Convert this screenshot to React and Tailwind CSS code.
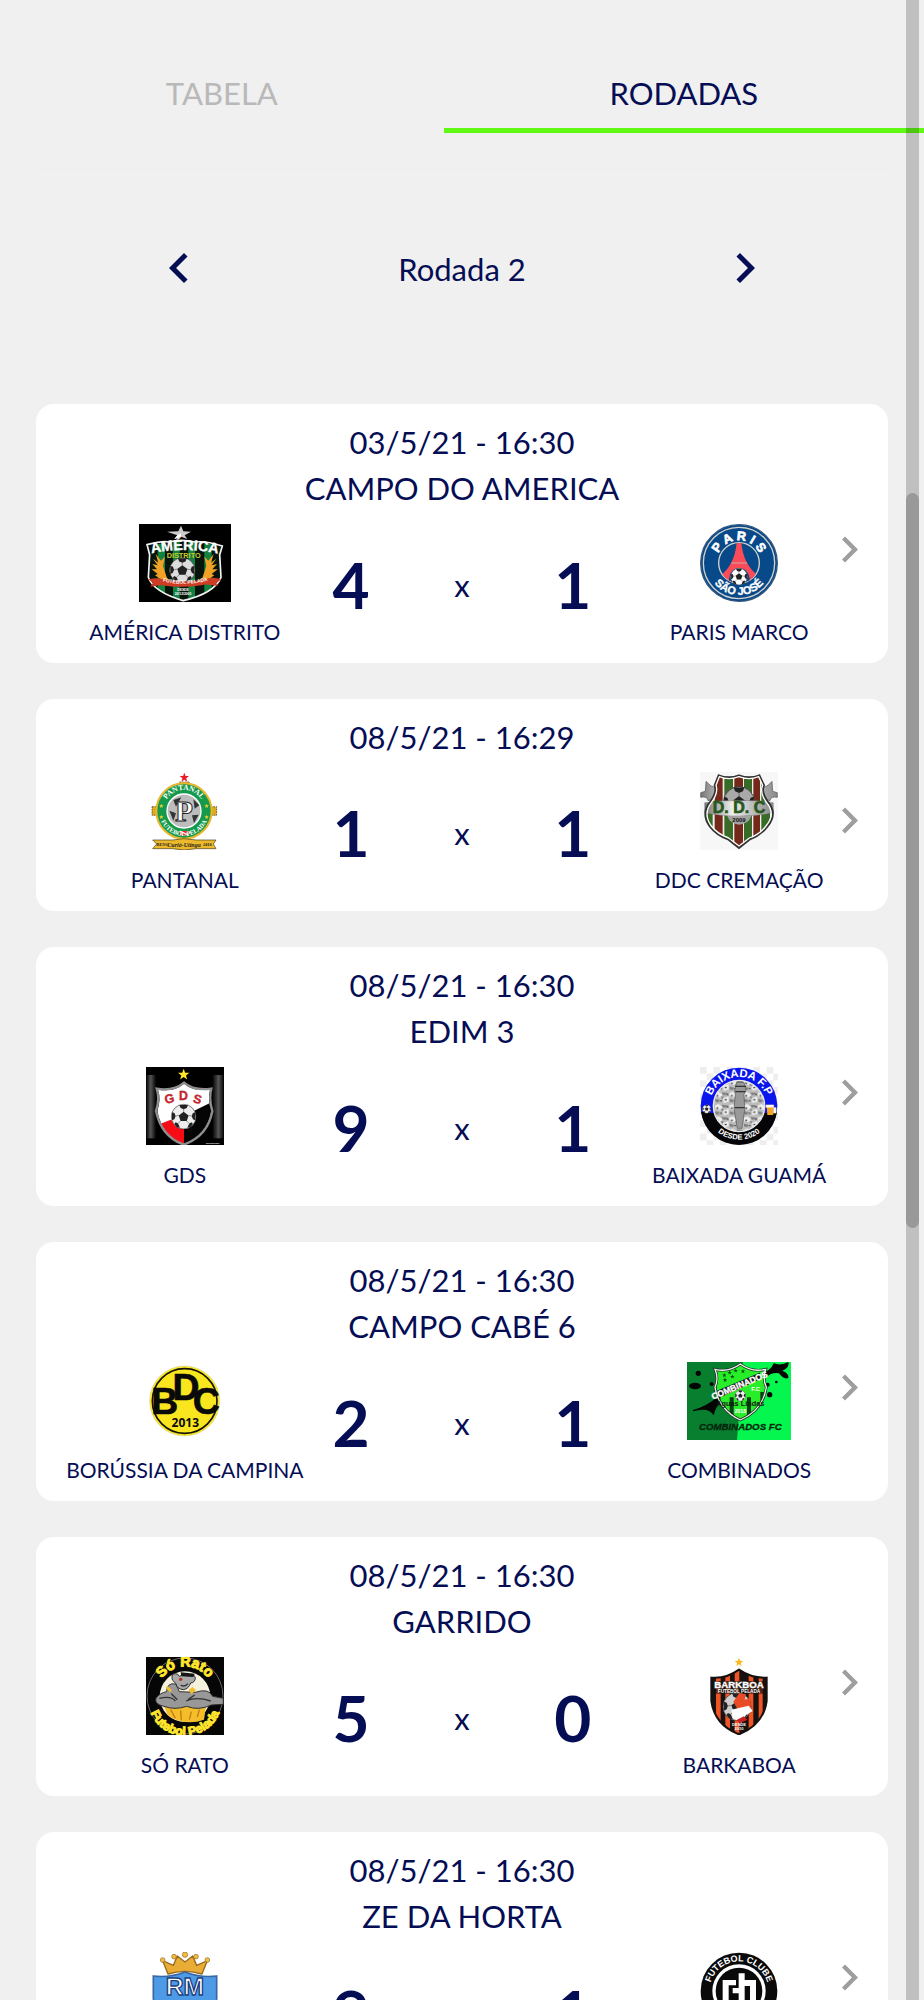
import { useState } from "react";

const star = "M0 -10 L2.5 -3.2 L9.5 -3.1 L3.9 1.2 L5.9 8.1 L0 4 L-5.9 8.1 L-3.9 1.2 L-9.5 -3.1 L-2.5 -3.2 Z";

const Star = ({ x, y, size, fill }) => (
  <path d={star} fill={fill} transform={`translate(${x} ${y}) scale(${size / 10})`} />
);

const Ball = ({ x, y, r, fill = "#eee" }) => (
  <g transform={`translate(${x} ${y}) scale(${r / 20})`}>
    <circle r="20" fill={fill} stroke="#333" strokeWidth="1" />
    <path
      d="M0 -8 L8 -2 L5 7 L-5 7 L-8 -2 Z M-7 -19 L7 -19 L5 -14 L0 -12 L-5 -14 Z M19 -7 L19 6 L15 4 L13 -1 L15 -6 Z M-19 -7 L-19 6 L-15 4 L-13 -1 L-15 -6 Z M11 17 L15 12 L13 9 L9 11 L6 18 Z M-11 17 L-15 12 L-13 9 L-9 11 L-6 18 Z"
      fill="#222"
    />
    <path
      d="M0 -8 V-13 M8 -2 L13 -1 M5 7 L9 11 M-5 7 L-9 11 M-8 -2 L-13 -1"
      stroke="#555"
      strokeWidth="1"
    />
  </g>
);

const America = () => (
  <svg viewBox="0 0 276 234" className="h-[78px] w-[92px]" role="img" aria-label="Escudo América Distrito">
    <defs>
      <clipPath id="america-shield">
        <path d="M27 66 Q126 42 249 66 L244 158 Q236 206 132 230 Q36 200 27 158 Z" />
      </clipPath>
      <path id="america-top" d="M30 90 Q134 66 244 90" />
      <path id="america-band" d="M72 172 Q134 188 206 170" />
    </defs>
    <rect width="276" height="234" fill="#000" />
    <g clipPath="url(#america-shield)">
      <rect width="276" height="234" fill="#07140c" />
      <path d="M56 40h22v194H56z M102 40h20v194h-20z M148 40h20v194h-20z M196 40h22v194h-22z" fill="#14823f" />
    </g>
    <path
      d="M24 62 Q70 50 90 54 Q126 44 168 54 Q200 50 250 66 L242 92 L246 160 Q226 208 132 230 Q44 204 28 160 L32 92 Z"
      fill="none"
      stroke="#f2f2f2"
      strokeWidth="5"
    />
    <path d="M126 5 L133 22 L156 23 L137 34 L145 45 L126 38 L106 45 L115 34 L84 23 L118 22 Z" fill="#ccc" />
    <path d="M126 5 L126 38 L106 45 L115 34 L126 28 Z" fill="#fff" />
    <path d="M42 104 L58 116 L50 90 L66 110 L78 98 L72 126 L84 162 L104 178 L72 170 L48 154 L56 150 L38 136 L54 136 L40 120 L56 124 Z" fill="#f0a126" />
    <path d="M232 104 L216 116 L224 90 L208 110 L196 98 L202 126 L190 162 L170 178 L202 170 L226 154 L218 150 L236 136 L220 136 L234 120 L218 124 Z" fill="#f0a126" />
    <Ball x={130} y={139} r={38} fill="#ddd" />
    <path d="M28 166 Q54 160 72 166 Q134 178 202 164 Q224 158 246 166 L232 178 L236 186 Q200 178 188 184 Q134 192 84 186 Q64 180 34 188 L42 176 Z" fill="#cf3c24" />
    <g fill="#fff" className="font-['Liberation_Sans',sans-serif] font-bold" textAnchor="middle">
      <text fontSize="43" stroke="#fff">
        <textPath href="#america-top" startOffset="50%">AMÉRICA</textPath>
      </text>
      <text x="134" y="101" fontSize="22" fill="#c8cc2d">DISTRITO</text>
      <text fontSize="15">
        <textPath href="#america-band" startOffset="50%">FUTEBOL PELADA</textPath>
      </text>
      <text x="132" y="202" fontSize="10">DESDE</text>
      <text x="132" y="212" fontSize="10">20/12/2005</text>
    </g>
  </svg>
);

const Paris = () => (
  <svg viewBox="0 0 234 234" className="size-[78px]" role="img" aria-label="Escudo Paris Marco">
    <defs>
      <path id="paris-top" d="M49 117 A68 68 0 0 1 185 117" />
      <path id="paris-bottom" d="M21 117 A96 96 0 0 0 213 117" />
      <clipPath id="paris-inner">
        <circle cx="117" cy="117" r="60" />
      </clipPath>
    </defs>
    <circle cx="117" cy="117" r="115" fill="#08498a" stroke="#32587f" strokeWidth="4" />
    <circle cx="117" cy="117" r="107" fill="none" stroke="#d3d3cc" strokeWidth="4" />
    <circle cx="117" cy="117" r="61" fill="#08498a" stroke="#d3d3cc" strokeWidth="4" />
    <g clipPath="url(#paris-inner)">
      <path d="M110 56 H124 Q130 124 178 158 L164 178 H70 L58 158 Q104 124 110 56 Z" fill="#fa4c58" />
      <path d="M86 176 Q88 132 117 132 Q148 132 150 176 Z" fill="#08498a" />
      <path d="M94 117 H141" stroke="#cfa6a8" strokeWidth="3" />
    </g>
    <Ball x={117} y={158} r={25} fill="#fff" />
    <g fill="#fff" className="font-['Liberation_Sans_Narrow','Liberation_Sans',sans-serif] font-bold" textAnchor="middle">
      <text fontSize="38" stroke="#fff" strokeWidth="2">
        <textPath href="#paris-top" startOffset="50%">P A R I S</textPath>
      </text>
      <text fontSize="33" stroke="#fff">
        <textPath href="#paris-bottom" startOffset="50%">SÃO JOSÉ</textPath>
      </text>
    </g>
  </svg>
);

const Pantanal = () => (
  <svg viewBox="0 0 234 234" className="size-[78px]" role="img" aria-label="Escudo Pantanal">
    <defs>
      <path id="pantanal-top" d="M52 116 A62 62 0 0 1 176 116" />
      <path id="pantanal-bottom" d="M38 116 A76 76 0 0 0 190 116" />
    </defs>
    <Star x={115} y={17} size={15} fill="#e81e25" />
    <path d="M100 30h30v18h-30z M18 104h24v26H18z M186 104h26v26h-26z M100 190h30v18h-30z" fill="#e0a91e" stroke="#2d2a20" strokeWidth="2" strokeDasharray="5 3" />
    <circle cx="114" cy="117" r="83" fill="#159a4c" stroke="#e7b730" strokeWidth="6" />
    <circle cx="114" cy="117" r="51" fill="#bcbcbc" stroke="#fff" strokeWidth="4" />
    <path d="M82 84 L106 76 L90 104 Z M142 82 L160 100 L146 110 Z M70 116 L90 124 L82 146 Z M138 130 L158 128 L144 154 Z" fill="#343434" />
    <path d="M20 204 H80 Q114 196 150 204 H210 L202 216 L210 230 H150 Q114 238 80 230 H20 L32 216 Z" fill="#edb92c" stroke="#443b1e" strokeWidth="2" />
    <path d="M102 177h26v13h-26z" fill="#e22" />
    <path d="M102 177 L128 190" stroke="#fff" strokeWidth="4" />
    {[[46, 102], [46, 135], [182, 102], [182, 135]].map(([x, y]) => (
      <Star key={`${x}-${y}`} x={x} y={y} size={7} fill="#f3cf3a" />
    ))}
    <g fill="#fff" className="font-['Liberation_Serif',serif] font-bold" textAnchor="middle">
      <text x="114" y="146" fontSize="88" stroke="#222" strokeWidth="3">P</text>
      <text fontSize="23">
        <textPath href="#pantanal-top" startOffset="50%">PANTANAL</textPath>
      </text>
      <text fontSize="19">
        <textPath href="#pantanal-bottom" startOffset="50%">FUTEBOL   PELADA</textPath>
      </text>
      <g fill="#222">
        <text x="50" y="222" fontSize="13">BENG</text>
        <text x="114" y="224" fontSize="18" className="italic">Curió-Utinga</text>
        <text x="184" y="222" fontSize="13">2010</text>
      </g>
    </g>
  </svg>
);

const Ddc = () => (
  <svg viewBox="0 0 234 234" className="size-[78px]" role="img" aria-label="Escudo DDC Cremação">
    <defs>
      <clipPath id="ddc-shield">
        <path d="M56 10 Q86 22 117 10 Q148 22 178 10 L192 40 Q182 60 204 90 Q234 126 202 164 Q182 190 150 202 L117 228 L84 202 Q50 190 30 164 Q2 126 30 90 Q52 60 44 40 Z" />
      </clipPath>
      <linearGradient id="ddc-silver" x1="0" x2="1">
        <stop offset="0" stopColor="#777" />
        <stop offset="0.4" stopColor="#eee" />
        <stop offset="1" stopColor="#8a8a8a" />
      </linearGradient>
    </defs>
    <rect width="234" height="234" fill="#f7f7f7" />
    <path d="M2 62 L16 58 L18 28 Q32 46 52 48 L48 78 L24 86 Q22 72 2 76 Z M232 62 L218 58 L216 28 Q202 46 182 48 L186 78 L210 86 Q212 72 232 76 Z" fill="url(#ddc-silver)" stroke="#555" strokeWidth="2" />
    <g clipPath="url(#ddc-shield)">
      <rect width="234" height="234" fill="#eee" />
      <path d="M16 20h22v214H16z M73 20h26v214H73z M132 20h24v214h-24z M184 20h26v214h-26z" fill="#386b26" />
      <path d="M44 10h24v224H44z M103 10h26v224h-26z M160 10h20v224h-20z" fill="#742819" />
    </g>
    <Ball x={117} y={91} r={47} fill="#a9a9a9" />
    <path d="M14 92 Q60 84 117 86 Q176 84 220 92 V122 Q176 132 117 132 Q58 132 14 122 Z" fill="url(#ddc-silver)" stroke="#666" />
    <path d="M82 132 H154 Q146 156 117 158 Q90 156 82 132 Z" fill="#a3a3a3" />
    <path
      d="M56 10 Q86 22 117 10 Q148 22 178 10 L192 40 Q182 60 204 90 Q234 126 202 164 Q182 190 150 202 L117 228 L84 202 Q50 190 30 164 Q2 126 30 90 Q52 60 44 40 Z"
      fill="none"
      stroke="#333"
      strokeWidth="6"
    />
    <path
      d="M58 14 Q86 26 117 14 Q148 26 176 14 L188 40 Q178 62 200 92 Q228 126 198 162 Q180 186 148 198 L117 222 L86 198 Q52 186 34 162 Q8 126 34 92 Q56 62 48 40 Z"
      fill="none"
      stroke="#fff"
      strokeWidth="4"
    />
    <g className="font-['Liberation_Sans',sans-serif] font-bold" textAnchor="middle">
      <text x="117" y="122" fontSize="48" fill="#27591c" stroke="#27591c" strokeWidth="2">D. D. C</text>
      <text x="117" y="151" fontSize="18" fill="#111">2009</text>
    </g>
  </svg>
);

const Gds = () => (
  <svg viewBox="0 0 234 234" className="size-[78px]" role="img" aria-label="Escudo GDS">
    <defs>
      <linearGradient id="gds-side">
        <stop offset="0" stopColor="#000" />
        <stop offset="0.06" stopColor="#555" />
        <stop offset="0.13" stopColor="#000" />
        <stop offset="0.85" stopColor="#000" />
        <stop offset="0.93" stopColor="#555" />
        <stop offset="1" stopColor="#000" />
      </linearGradient>
      <clipPath id="gds-shield">
        <path d="M114 50 Q84 76 36 68 Q46 96 34 132 Q48 206 114 232 Q184 204 196 132 Q184 96 192 68 Q142 74 114 50 Z" />
      </clipPath>
    </defs>
    <rect width="234" height="234" fill="#000" />
    <rect y="24" width="234" height="190" fill="url(#gds-side)" />
    <g clipPath="url(#gds-shield)">
      <rect width="234" height="234" fill="#fff" />
      <path d="M30 176 L74 158 L114 184 V234 H30 Z" fill="#f50c15" />
      <path d="M204 102 L114 146 V234 H204 Z" fill="#050505" />
    </g>
    <path
      d="M114 47 Q84 73 32 65 Q42 96 30 132 Q46 210 114 233 Q186 206 199 132 Q188 96 196 65 Q142 72 114 47 Z"
      fill="none"
      stroke="#8e8e90"
      strokeWidth="7"
    />
    <Star x={113} y={23} size={18} fill="#ffe62b" />
    <Ball x={113} y={149} r={37} />
    <g fill="#dc2630" stroke="#8b1820" strokeWidth="1" fontSize="37" className="font-['Liberation_Sans',sans-serif] font-bold" textAnchor="middle">
      <text x="70" y="108" transform="rotate(-14 70 96)">G</text>
      <text x="112" y="99">D</text>
      <text x="155" y="109" transform="rotate(14 155 96)">S</text>
    </g>
    <text x="200" y="232" fontSize="8" fill="#fff" textAnchor="middle">DesignGDS</text>
  </svg>
);

const Baixada = () => (
  <svg viewBox="0 0 234 234" className="size-[78px]" role="img" aria-label="Escudo Baixada Guamá">
    <defs>
      <pattern id="baixada-check" width="40" height="40" patternUnits="userSpaceOnUse">
        <rect width="40" height="40" fill="#fff" />
        <path d="M0 0h20v20H0z M20 20h20v20H20z" fill="#eee" />
      </pattern>
      <pattern id="baixada-town" width="43" height="37" patternUnits="userSpaceOnUse">
        <rect width="43" height="37" fill="#bdbdbd" />
        <path d="M0 6 L12 0 L24 8 L20 18 L4 16 Z M26 20 L43 14 V30 L28 34 Z" fill="#eee" />
        <path d="M22 2 L40 4 L36 10 H26 Z M3 22 L15 25 L12 33 L3 30 Z M18 14 L28 16 L25 22 Z" fill="#7d7d7d" />
        <path d="M7 10h5v5H7z M31 23l6 -1v4h-6z M16 26h7v3h-7z M38 6h4v5h-4z" fill="#3c3c3c" />
      </pattern>
      <path id="baixada-top" d="M29 118 A88 88 0 0 1 205 118" />
      <path id="baixada-bottom" d="M16 117 A101 101 0 0 0 218 117" />
    </defs>
    <rect width="234" height="234" fill="url(#baixada-check)" />
    <circle cx="117" cy="117" r="115" fill="#0b16ec" />
    <path d="M3 134 Q117 150 231 134 A115 115 0 0 1 3 134 Z" fill="#050507" />
    <circle cx="117" cy="117" r="77" fill="url(#baixada-town)" stroke="#e9e9e9" strokeWidth="4" />
    <path d="M104 70 L110 46 H132 L138 70 L132 82 L134 128 L126 184 H112 L102 124 L106 82 Z" fill="#999" stroke="#555" strokeWidth="2" />
    <path d="M106 58 H138 M106 74 H136 M104 122 H134" stroke="#333" strokeWidth="4" />
    <Ball x={20} y={126} r={13} />
    <path d="M200 118 H220 V144 H202 Z" fill="#f6a51c" />
    <path d="M198 114 H221 V121 H198 Z M220 122 H228 V138 H220" fill="#fff" stroke="#f8dfb1" strokeWidth="2" />
    <g fill="#fff" className="font-['Liberation_Sans',sans-serif] font-bold" textAnchor="middle">
      <text fontSize="34">
        <textPath href="#baixada-top" startOffset="50%">BAIXADA F.P</textPath>
      </text>
      <text fontSize="23">
        <textPath href="#baixada-bottom" startOffset="50%">DESDE 2020</textPath>
      </text>
    </g>
  </svg>
);

const Borussia = () => (
  <svg viewBox="0 0 234 234" className="size-[78px]" role="img" aria-label="Escudo Borússia da Campina">
    <circle cx="116" cy="117" r="105" fill="#f9e61e" stroke="#d9d5a0" strokeWidth="2" />
    <circle cx="116" cy="117" r="97" fill="none" stroke="#16140a" strokeWidth="5" />
    <g fill="#0a0a08" className="font-['Liberation_Sans_Narrow','Liberation_Sans',sans-serif] font-bold" textAnchor="middle">
      <text x="56" y="157" fontSize="112" stroke="#0a0a08" strokeWidth="2">B</text>
      <text x="120" y="113" fontSize="112" stroke="#0a0a08" strokeWidth="2">D</text>
      <text x="181" y="157" fontSize="112" stroke="#0a0a08" strokeWidth="2">C</text>
      <text x="118" y="196" fontSize="36" className="font-['Open_Sans',sans-serif]">2013</text>
    </g>
  </svg>
);

const Combinados = () => (
  <svg viewBox="0 0 312 234" className="h-[78px] w-[104px]" role="img" aria-label="Escudo Combinados">
    <defs>
      <clipPath id="combinados-shield">
        <path d="M160 8 Q126 34 88 24 Q98 50 88 76 Q98 142 160 172 Q224 142 234 76 Q222 50 232 24 Q194 32 160 8 Z" />
      </clipPath>
    </defs>
    <rect width="312" height="234" fill="#05f64f" />
    <path d="M0 0 H168 L150 234 H0 Z" fill="#087f2e" />
    <path d="M204 38 Q248 34 260 4 Q282 12 304 0 Q308 18 286 26 Q306 34 304 48 Q290 54 276 34 Q254 30 238 46 Q220 46 204 54 Z" fill="#020502" />
    <path d="M18 144 Q60 132 92 104 L104 126 Q88 126 80 160 Q66 134 18 148 Z" fill="#020502" />
    <g fill="#020502">
      <circle cx="34" cy="34" r="8" />
      <ellipse cx="24" cy="72" rx="18" ry="10" />
      <circle cx="74" cy="66" r="6" />
      <circle cx="248" cy="98" r="8" />
      <circle cx="268" cy="60" r="4" />
      <circle cx="242" cy="68" r="6" />
    </g>
    <g clipPath="url(#combinados-shield)">
      <rect width="312" height="234" fill="#27ee28" />
      <path d="M128 106h12v74h-12z M180 106h12v74h-12z M88 106h12v60H88z M220 90h12v60h-12z" fill="#093d12" />
    </g>
    <path
      d="M160 6 Q126 32 84 22 Q96 50 84 76 Q96 144 160 174 Q228 144 238 76 Q226 50 236 22 Q194 32 160 6 Z"
      fill="none"
      stroke="#222"
      strokeWidth="8"
    />
    <path
      d="M160 6 Q126 32 84 22 Q96 50 84 76 Q96 144 160 174 Q228 144 238 76 Q226 50 236 22 Q194 32 160 6 Z"
      fill="none"
      stroke="#e9f5e9"
      strokeWidth="4"
    />
    {[[112, 40], [128, 32], [146, 26], [168, 28], [114, 54], [136, 44]].map(([x, y]) => (
      <Star key={`${x}-${y}`} x={x} y={y} size={7} fill="#0a4d13" />
    ))}
    <path d="M90 86 L218 32 L222 50 L96 108 Z" fill="#111" />
    <Ball x={160} y={101} r={16} />
    <g className="font-['Liberation_Sans_Narrow','Liberation_Sans',sans-serif] font-bold" textAnchor="middle">
      <text x="158" y="79" fontSize="26" fill="#fff" stroke="#fff" transform="rotate(-23 158 71)">COMBINADOS</text>
      <text x="206" y="88" fontSize="18" fill="#fff">F.C</text>
      <text x="160" y="131" fontSize="22" fill="#101a10">Águas Lindas</text>
      <text x="160" y="154" fontSize="16" fill="#fff">2018</text>
      <text x="160" y="205" fontSize="29" fill="#04250c" stroke="#04250c" className="italic">COMBINADOS FC</text>
    </g>
  </svg>
);

const SoRato = () => (
  <svg viewBox="0 0 234 234" className="size-[78px]" role="img" aria-label="Escudo Só Rato">
    <defs>
      <path id="rato-top" d="M34 92 A86 86 0 0 1 200 92" />
      <path id="rato-bottom" d="M9 136 A108 100 0 0 0 225 136" />
    </defs>
    <rect width="234" height="234" fill="#060606" />
    <circle cx="117" cy="117" r="114" fill="none" stroke="#666" strokeWidth="3" />
    <circle cx="117" cy="119" r="76" fill="#f4f1de" />
    <path d="M54 148 H180 L174 188 Q120 208 66 176 Z" fill="#f4be2b" />
    <path d="M74 158 L88 184 M104 160 L106 190 M136 164 L130 188 M160 158 L154 180" stroke="#c57b13" strokeWidth="4" />
    <path d="M64 90 Q74 76 90 82 L100 104 L148 106 Q188 92 200 118 L232 124 V142 L196 144 Q158 162 122 148 Q86 160 54 148 Q24 142 30 124 Q40 108 62 104 Z" fill="#989898" stroke="#303030" strokeWidth="3" />
    <path d="M80 70 Q74 56 84 50 Q96 48 100 58 Q112 48 128 56 Q142 46 148 62 Q148 76 134 78 Q128 96 112 98 Q92 96 90 80 Z" fill="#a8a8a8" stroke="#303030" strokeWidth="3" />
    <path d="M104 46 L146 50 L142 60 L106 58 Z" fill="#151515" />
    <circle cx="104" cy="67" r="5" fill="#b92a22" />
    <path d="M104 84 Q116 92 126 80 M40 124 Q76 116 88 132 M120 132 Q152 118 194 132 M76 110 L94 128 M146 114 L126 128" fill="none" stroke="#333" strokeWidth="4" />
    <path d="M64 86 L78 100 L72 106 L60 94 Z M128 98 L140 90 L150 100 L136 112 Z" fill="#f4be2b" />
    <g fill="#ffe62c" stroke="#ffe62c" strokeWidth="3" className="font-['Liberation_Sans',sans-serif] font-bold" textAnchor="middle">
      <text fontSize="43">
        <textPath href="#rato-top" startOffset="50%">Só Rato</textPath>
      </text>
      <text fontSize="37">
        <textPath href="#rato-bottom" startOffset="50%">Futebol Pelada</textPath>
      </text>
    </g>
  </svg>
);

const Barkaboa = () => (
  <svg viewBox="0 0 234 234" className="size-[78px]" role="img" aria-label="Escudo Barkaboa">
    <defs>
      <clipPath id="barkaboa-shield">
        <path d="M117 38 Q78 66 34 62 V132 Q44 204 117 232 Q190 204 200 132 V62 Q154 64 117 38 Z" />
      </clipPath>
    </defs>
    <Star x={117} y={16} size={14} fill="#fcb91f" />
    <g clipPath="url(#barkaboa-shield)">
      <rect width="234" height="234" fill="#17110f" />
      <path d="M48 40h14v194H48z M76 40h14v194H76z M104 40h14v194h-14z M146 40h14v194h-14z M176 40h12v194h-12z" fill="#ee5425" />
      <path d="M34 72 H200 V110 H34 Z" fill="#17110f" fillOpacity="0.7" />
    </g>
    <path d="M117 38 Q78 66 34 62 V132 Q44 204 117 232 Q190 204 200 132 V62 Q154 64 117 38 Z" fill="none" stroke="#15100e" strokeWidth="6" />
    <Ball x={111} y={149} r={42} fill="#cfcfcf" />
    <path d="M118 108 L138 112 L134 128 L150 124 L154 150 L136 162 L112 156 L100 134 Z" fill="#e94b27" />
    <path d="M94 158 L146 146 L158 162 L138 174 L124 198 L98 182 Z" fill="#fff" />
    <path d="M108 190 L132 178 L142 188 L122 198 Z" fill="#cc2020" />
    <g fill="#fff" className="font-['Liberation_Sans',sans-serif] font-bold" textAnchor="middle">
      <text x="117" y="93" fontSize="29" stroke="#fff" strokeWidth="1">BARKBOA</text>
      <text x="117" y="107" fontSize="14">FUTEBOL PELADA</text>
      <text x="117" y="206" fontSize="12">DESDE</text>
      <text x="117" y="218" fontSize="12">2010</text>
    </g>
  </svg>
);

const Crown = () => (
  <svg viewBox="0 0 234 234" className="size-[78px]" role="img" aria-label="Escudo RM">
    <path d="M66 66 L50 26 L82 40 L94 12 L117 30 L140 12 L152 40 L184 26 L168 66 Q117 50 66 66 Z" fill="#e9ad35" stroke="#97691a" strokeWidth="4" />
    <g fill="#f1bd48" stroke="#97691a" strokeWidth="2">
      <circle cx="50" cy="24" r="7" />
      <circle cx="84" cy="14" r="7" />
      <circle cx="117" cy="8" r="8" />
      <circle cx="150" cy="14" r="7" />
      <circle cx="184" cy="24" r="7" />
    </g>
    <path d="M22 72 Q70 78 117 60 Q164 78 212 72 V140 Q202 208 117 232 Q32 208 22 140 Z" fill="#4d9be6" stroke="#3a66a8" strokeWidth="5" />
    <text x="117" y="130" fontSize="74" fill="#fff" stroke="#1d3f80" strokeWidth="4" textAnchor="middle" className="font-['Liberation_Sans',sans-serif] font-bold">RM</text>
  </svg>
);

const Futebol = () => (
  <svg viewBox="0 0 234 234" className="size-[78px]" role="img" aria-label="Escudo Futebol Clube">
    <defs>
      <path id="futebol-top" d="M28 117 A89 89 0 0 1 206 117" />
    </defs>
    <circle cx="117" cy="117" r="115" fill="#0a0a0a" />
    <circle cx="117" cy="117" r="80" fill="#fff" />
    <circle cx="117" cy="117" r="70" fill="#0a0a0a" />
    <path d="M68 84 H108 V100 H86 V164 H68 Z M116 64 H134 V84 H168 V164 H150 V102 H134 V164 H116 V124 H98 V108 H116 Z" fill="#fff" />
    <text fontSize="27" fill="#fff" textAnchor="middle" className="font-['Liberation_Sans',sans-serif] font-bold">
      <textPath href="#futebol-top" startOffset="50%">FUTEBOL CLUBE</textPath>
    </text>
  </svg>
);

const matches = [
  {
    date: "03/5/21 - 16:30",
    place: "CAMPO DO AMERICA",
    home: { name: "AMÉRICA DISTRITO", goals: 4, Crest: America },
    away: { name: "PARIS MARCO", goals: 1, Crest: Paris },
  },
  {
    date: "08/5/21 - 16:29",
    home: { name: "PANTANAL", goals: 1, Crest: Pantanal },
    away: { name: "DDC CREMAÇÃO", goals: 1, Crest: Ddc },
  },
  {
    date: "08/5/21 - 16:30",
    place: "EDIM 3",
    home: { name: "GDS", goals: 9, Crest: Gds },
    away: { name: "BAIXADA GUAMÁ", goals: 1, Crest: Baixada },
  },
  {
    date: "08/5/21 - 16:30",
    place: "CAMPO CABÉ 6",
    home: { name: "BORÚSSIA DA CAMPINA", goals: 2, Crest: Borussia },
    away: { name: "COMBINADOS", goals: 1, Crest: Combinados },
  },
  {
    date: "08/5/21 - 16:30",
    place: "GARRIDO",
    home: { name: "SÓ RATO", goals: 5, Crest: SoRato },
    away: { name: "BARKABOA", goals: 0, Crest: Barkaboa },
  },
  {
    date: "08/5/21 - 16:30",
    place: "ZE DA HORTA",
    home: { name: "", goals: 9, Crest: Crown },
    away: { name: "", goals: 1, Crest: Futebol },
  },
];

const Team = ({ name, Crest }) => (
  <div className="col-span-2 flex flex-col items-center gap-3.5">
    <Crest />
    <span className="h-[31px] whitespace-nowrap text-[21px] leading-[31px]">{name}</span>
  </div>
);

const MatchCard = ({ match }) => (
  <article className="flex items-center rounded-[18px] bg-white pt-[15px] pr-[30px] pb-4 pl-[38px]">
    <div className="flex-1 text-center">
      <p className="text-[31px] leading-[46px]">{match.date}</p>
      {match.place && <h2 className="text-[31px] leading-[47px]">{match.place}</h2>}
      <div className="mt-3 grid grid-cols-7 items-center">
        <Team {...match.home} />
        <strong className="pb-0.5 text-[64px] leading-[76px]">{match.home.goals}</strong>
        <span className="pb-0.5 text-[31px] leading-[46px]">x</span>
        <strong className="pb-0.5 text-[64px] leading-[76px]">{match.away.goals}</strong>
        <Team {...match.away} />
      </div>
    </div>
    <button type="button" aria-label="Ver partida" className="mt-8 -ml-2 text-[#9e9e9e]">
      <svg viewBox="8.59 6 7.41 12" className="h-[27px] w-4" fill="currentColor">
        <path d="M10 6 8.59 7.41 13.17 12l-4.58 4.59L10 18l6-6z" />
      </svg>
    </button>
  </article>
);

export default function App() {
  const [tab, setTab] = useState("RODADAS");
  const [round, setRound] = useState(2);

  return (
    <div className="relative h-screen overflow-hidden bg-[#f0f0f0] pt-14 font-['Lato',sans-serif] text-[#050d54]">
      <div role="tablist" className="flex">
        {["TABELA", "RODADAS"].map((label) => (
          <button
            key={label}
            type="button"
            role="tab"
            aria-selected={tab === label}
            onClick={() => setTab(label)}
            className={`flex-auto border-b-[5px] pt-0.5 text-[31px] leading-[70px] ${
              tab === label ? "border-[#5ff914]" : "border-transparent text-[#b9b9b9]"
            }`}
          >
            {label}
          </button>
        ))}
      </div>

      <hr className="mx-9 mt-[35px] border-[#eeeeee]" />

      <div className="mx-[149px] mt-[69px] flex items-center justify-between">
        <button type="button" aria-label="Rodada anterior" onClick={() => setRound(Math.max(1, round - 1))}>
          <svg viewBox="0 0 24 24" className="size-[60px]" fill="currentColor">
            <path d="M15.41 7.41 14 6l-6 6 6 6 1.41-1.41L10.83 12z" />
          </svg>
        </button>
        <h1 className="pt-0.5 text-[31px] leading-[46px]">Rodada {round}</h1>
        <button type="button" aria-label="Próxima rodada" onClick={() => setRound(round + 1)}>
          <svg viewBox="0 0 24 24" className="size-[60px]" fill="currentColor">
            <path d="M10 6 8.59 7.41 13.17 12l-4.58 4.59L10 18l6-6z" />
          </svg>
        </button>
      </div>

      <main className="mt-[106px] flex flex-col gap-9 px-9">
        {matches.map((match, i) => (
          <MatchCard key={i} match={match} />
        ))}
      </main>

      {/* overlay scrollbar */}
      <div className="pointer-events-none absolute inset-y-0 right-[5px] w-[13px] bg-black/20">
        <div className="mt-[493px] h-[735px] rounded-full bg-black/20" />
      </div>
    </div>
  );
}
